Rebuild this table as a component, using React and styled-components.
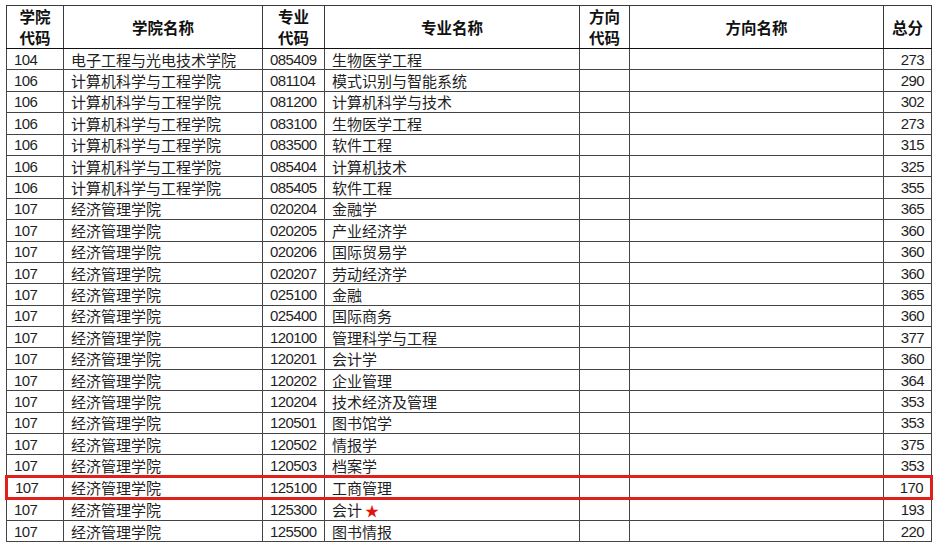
import React from 'react';
import styled, { createGlobalStyle, css } from 'styled-components';

const GlobalStyle = createGlobalStyle`
  html, body {
    margin: 0;
    padding: 0;
    background: #ffffff;
  }
  body {
    font-family: "Liberation Sans", "Noto Sans CJK SC", sans-serif;
    color: #1f1f1f;
  }
`;

const Page = styled.div`
  padding: 5px 0 0 5px;
`;

const Table = styled.table`
  border-collapse: collapse;
  table-layout: fixed;
  width: 925px;
  font-size: 15px;
`;

const HeadCell = styled.th`
  height: 42px;
  padding: 0 2px;
  border: 1px solid #3a3a3a;
  border-bottom: 1px solid #111;
  font-family: "Noto Sans CJK SC", sans-serif;
  font-weight: 700;
  font-size: 15.5px;
  line-height: 21px;
  text-align: center;
  color: #111;
`;

const Row = styled.tr`
  height: ${p => (p.$highlight ? '20px' : '21.4px')};
  ${p => p.$highlight && css`
    td {
      border-top: 3px solid #e0201b;
      border-bottom: 3px solid #e0201b;
    }
    td:first-child { border-left: 3px solid #e0201b; }
    td:last-child { border-right: 3px solid #e0201b; }
  `}
`;

const Cell = styled.td`
  border: 1px solid #444;
  padding: 0 7px;
  line-height: 19px;
  white-space: nowrap;
  overflow: hidden;
  text-align: ${p => (p.$right ? 'right' : 'left')};
  ${p => p.$num && css`
    letter-spacing: -0.6px;
    font-family: "Liberation Sans", sans-serif;
  `}
  ${p => p.$cjk && css`
    font-family: "Noto Sans CJK SC", sans-serif;
    font-weight: 400;
  `}
`;

const Star = styled.span`
  color: #e3120b;
  margin-left: 3px;
  font-size: 14px;
`;

const cols = [57, 199, 62, 255, 50, 254, 48];

const rows = [
  ['104', '电子工程与光电技术学院', '085409', '生物医学工程', '273'],
  ['106', '计算机科学与工程学院', '081104', '模式识别与智能系统', '290'],
  ['106', '计算机科学与工程学院', '081200', '计算机科学与技术', '302'],
  ['106', '计算机科学与工程学院', '083100', '生物医学工程', '273'],
  ['106', '计算机科学与工程学院', '083500', '软件工程', '315'],
  ['106', '计算机科学与工程学院', '085404', '计算机技术', '325'],
  ['106', '计算机科学与工程学院', '085405', '软件工程', '355'],
  ['107', '经济管理学院', '020204', '金融学', '365'],
  ['107', '经济管理学院', '020205', '产业经济学', '360'],
  ['107', '经济管理学院', '020206', '国际贸易学', '360'],
  ['107', '经济管理学院', '020207', '劳动经济学', '360'],
  ['107', '经济管理学院', '025100', '金融', '365'],
  ['107', '经济管理学院', '025400', '国际商务', '360'],
  ['107', '经济管理学院', '120100', '管理科学与工程', '377'],
  ['107', '经济管理学院', '120201', '会计学', '360'],
  ['107', '经济管理学院', '120202', '企业管理', '364'],
  ['107', '经济管理学院', '120204', '技术经济及管理', '353'],
  ['107', '经济管理学院', '120501', '图书馆学', '353'],
  ['107', '经济管理学院', '120502', '情报学', '375'],
  ['107', '经济管理学院', '120503', '档案学', '353'],
  ['107', '经济管理学院', '125100', '工商管理', '170', 'hl'],
  ['107', '经济管理学院', '125300', '会计', '193', 'star'],
  ['107', '经济管理学院', '125500', '图书情报', '220'],
];

export default function App() {
  return (
    <Page>
      <GlobalStyle />
      <Table>
        <colgroup>
          {cols.map((w, i) => <col key={i} style={{ width: w }} />)}
        </colgroup>
        <thead>
          <tr>
            <HeadCell>学院<br />代码</HeadCell>
            <HeadCell>学院名称</HeadCell>
            <HeadCell>专业<br />代码</HeadCell>
            <HeadCell>专业名称</HeadCell>
            <HeadCell>方向<br />代码</HeadCell>
            <HeadCell>方向名称</HeadCell>
            <HeadCell>总分</HeadCell>
          </tr>
        </thead>
        <tbody>
          {rows.map(([code, school, major, name, score, flag], i) => (
            <Row key={i} $highlight={flag === 'hl'}>
              <Cell $num>{code}</Cell>
              <Cell $cjk>{school}</Cell>
              <Cell $num>{major}</Cell>
              <Cell $cjk>
                {name}
                {flag === 'star' && <Star>★</Star>}
              </Cell>
              <Cell />
              <Cell />
              <Cell $num $right>{score}</Cell>
            </Row>
          ))}
        </tbody>
      </Table>
    </Page>
  );
}
